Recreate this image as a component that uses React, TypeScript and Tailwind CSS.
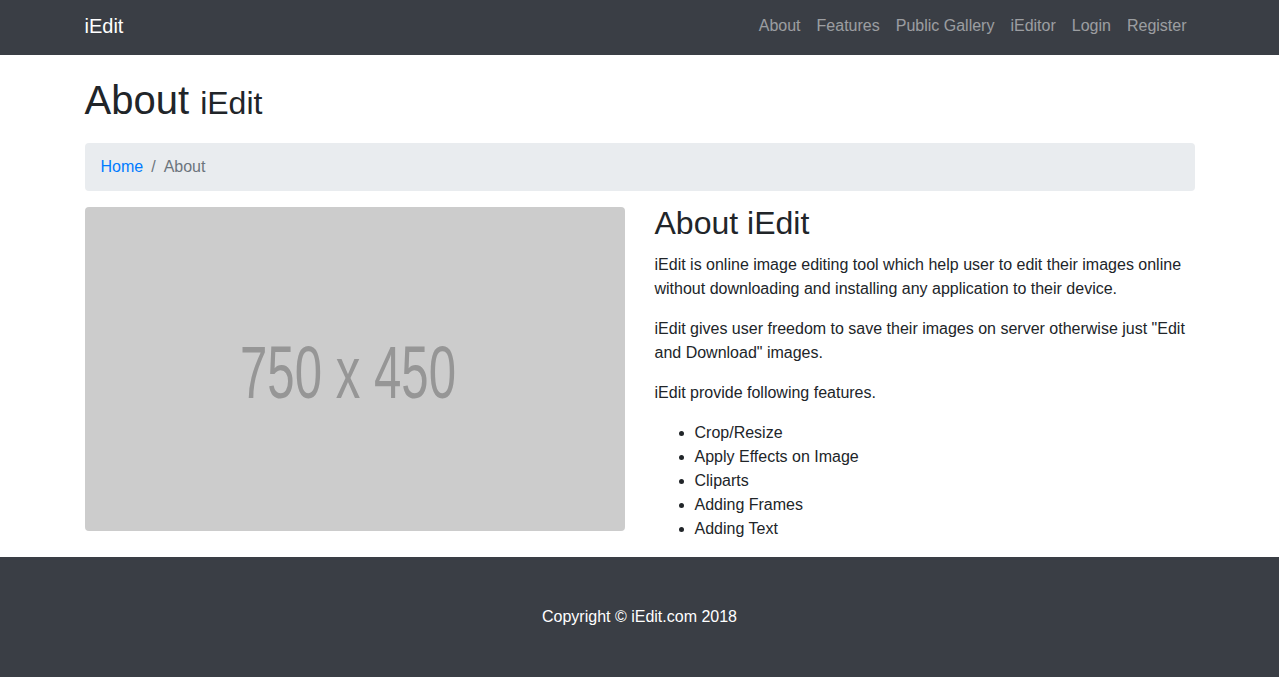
import React from "react";

export default function App() {
  const links = ["About", "Features", "Public Gallery", "iEditor", "Login", "Register"];
  const features = ["Crop/Resize", "Apply Effects on Image", "Cliparts", "Adding Frames", "Adding Text"];
  return (
    <div className="font-['Liberation_Sans',Arial,sans-serif] text-[#212529] text-base leading-6 bg-white">
      <nav className="bg-[#3a3e45] pt-[6px] pb-[9px]">
        <div className="w-[1140px] mx-auto px-[15px] flex items-center justify-between h-[40px]">
          <a className="text-white text-xl leading-[30px] py-[5px]">iEdit</a>
          <ul className="flex">
            {links.map((l) => (
              <li key={l}>
                <a className="block px-2 py-2 text-white/50">{l}</a>
              </li>
            ))}
          </ul>
        </div>
      </nav>

      <div className="w-[1140px] mx-auto px-[15px]">
        <h1 className="mt-6 mb-4 pb-[6px] text-[40px] leading-[42px] font-normal">
          About <small className="text-[32px] leading-none">iEdit</small>
        </h1>

        <ol className="flex bg-[#e9ecef] rounded px-4 py-3 mb-4">
          <li>
            <a className="text-[#007bff]">Home</a>
          </li>
          <li className="text-[#6c757d]">
            <span className="px-2">/</span>About
          </li>
        </ol>

        <div className="flex -mx-[15px]">
          <div className="w-1/2 px-[15px] mb-6">
            <div className="w-[540px] h-[324px] bg-[#cccccc] rounded flex items-center justify-center">
              <svg width="540" height="324" viewBox="0 0 540 324">
                <text
                  x="155"
                  y="191"
                  fontSize="74"
                  fill="#969696"
                  fontFamily="Liberation Sans, Arial, sans-serif"
                  textLength="216"
                  lengthAdjust="spacingAndGlyphs"
                >
                  750 x 450
                </text>
              </svg>
            </div>
          </div>
          <div className="w-1/2 px-[15px]">
            <h2 className="text-[32px] leading-[32px] mb-[14.4px] font-normal">About iEdit</h2>
            <p className="mb-4">
              iEdit is online image editing tool which help user to edit their images online without downloading and installing any application to their device.
            </p>
            <p className="mb-4">
              iEdit gives user freedom to save their images on server otherwise just "Edit and Download" images.
            </p>
            <p className="mb-4">iEdit provide following features.</p>
            <ul className="list-disc pl-10 mb-4">
              {features.map((f) => (
                <li key={f}>{f}</li>
              ))}
            </ul>
          </div>
        </div>
      </div>

      <footer className="bg-[#3a3e45] py-12">
        <p className="text-center text-white">Copyright © iEdit.com 2018</p>
      </footer>
    </div>
  );
}
